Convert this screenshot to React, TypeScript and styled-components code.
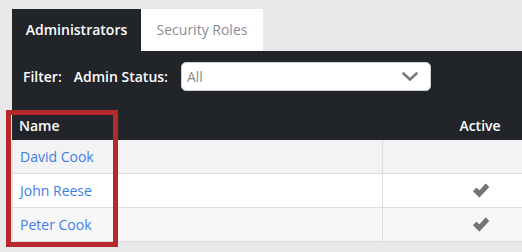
import React from "react";
import styled, { createGlobalStyle } from "styled-components";

const GlobalStyle = createGlobalStyle`
  html, body {
    margin: 0;
    padding: 0;
    background: #e9e9e9;
    overflow: hidden;
  }
  body {
    font-family: "Open Sans", "Liberation Sans", sans-serif;
    font-size: 14px;
  }
`;

type Admin = { name: string; active: boolean };

const admins: Admin[] = [
  { name: "David Cook", active: false },
  { name: "John Reese", active: true },
  { name: "Peter Cook", active: true },
];

const CheckIcon = () => (
  <svg width="18" height="17" viewBox="0 0 17 16">
    <path
      d="M1.5 8.6 L4.3 5.9 L7 8.6 L13 2 L15.7 4.7 L7 14 Z"
      fill="#747474"
      stroke="#747474"
      strokeWidth="1"
      strokeLinejoin="round"
    />
  </svg>
);

const Chevron = () => (
  <svg width="16" height="9" viewBox="0 0 16 9">
    <path
      d="M1.5 1.5 L8 7.5 L14.5 1.5"
      fill="none"
      stroke="#7a7a7a"
      strokeWidth="2.6"
      strokeLinecap="round"
    />
  </svg>
);

const App = () => {
  return (
    <>
      <GlobalStyle />
      <PageSC>
        <PanelSC>
          <TabsSC>
            <TabSC $active>Administrators</TabSC>
            <TabSC>Security Roles</TabSC>
          </TabsSC>
          <DarkSC>
            <FilterRowSC>
              <FilterLabelSC $gap={12}>Filter:</FilterLabelSC>
              <FilterLabelSC $gap={13}>Admin Status:</FilterLabelSC>
              <SelectSC>
                <span>All</span>
                <Chevron />
              </SelectSC>
            </FilterRowSC>
            <HeadRowSC>
              <HeadCellSC>Name</HeadCellSC>
              <HeadCellSC $center>Active</HeadCellSC>
            </HeadRowSC>
          </DarkSC>
          <BodySC>
            {admins.map((a, i) => (
              <RowSC key={a.name} $index={i}>
                <NameCellSC>
                  <LinkSC>{a.name}</LinkSC>
                </NameCellSC>
                <ActiveCellSC>{a.active && <CheckIcon />}</ActiveCellSC>
              </RowSC>
            ))}
          </BodySC>
        </PanelSC>
        <HighlightSC />
      </PageSC>
    </>
  );
};

const PageSC = styled.div`
  position: relative;
  padding: 9px 0 10px 12px;
  width: 600px;
`;

const PanelSC = styled.div`
  width: 566px;
`;

const TabsSC = styled.div`
  display: flex;
  height: 42px;
`;

const TabSC = styled.div<{ $active?: boolean }>`
  display: flex;
  align-items: center;
  justify-content: center;
  box-sizing: border-box;
  background: ${(p) => (p.$active ? "#212429" : "#ffffff")};
  color: ${(p) => (p.$active ? "#ffffff" : "#8b8e95")};
  font-weight: ${(p) => (p.$active ? 600 : 400)};
  width: ${(p) => (p.$active ? "129px" : "122px")};
  padding-bottom: 1px;
`;

const DarkSC = styled.div`
  background: #212429;
  color: #ffffff;
`;

const FilterRowSC = styled.div`
  display: flex;
  align-items: center;
  padding: 11px 0 0 11px;
  height: 29px;
`;

const FilterLabelSC = styled.span<{ $gap: number }>`
  font-weight: 600;
  margin-right: ${(p) => p.$gap}px;
`;

const SelectSC = styled.div`
  display: flex;
  align-items: center;
  justify-content: space-between;
  box-sizing: border-box;
  width: 250px;
  height: 29px;
  padding: 0 12px 0 5px;
  background: #ffffff;
  border: 1px solid #cfcfcf;
  border-radius: 5px;
  color: #8a8a8a;
`;

const HeadRowSC = styled.div`
  display: grid;
  grid-template-columns: 370px 1fr;
  height: 30px;
  margin-top: 19px;
  align-items: center;
`;

const HeadCellSC = styled.div<{ $center?: boolean }>`
  padding-left: ${(p) => (p.$center ? "0" : "7px")};
  text-align: ${(p) => (p.$center ? "center" : "left")};
  font-weight: 600;
`;

const BodySC = styled.div`
  border-left: 1px solid #dcdcdc;
`;

const RowSC = styled.div<{ $index: number }>`
  display: grid;
  grid-template-columns: 370px 1fr;
  height: 34px;
  box-sizing: border-box;
  border-bottom: 1px solid #dcdcdc;
  background: ${(p) =>
    p.$index === 0 ? "#f3f3f3" : p.$index % 2 === 1 ? "#ffffff" : "#f7f7f7"};
`;

const NameCellSC = styled.div`
  display: flex;
  align-items: center;
  padding-left: 7px;
  border-right: 1px solid #dcdcdc;
`;

const ActiveCellSC = styled.div`
  display: flex;
  align-items: center;
  justify-content: center;
`;

const LinkSC = styled.a`
  color: #3d7ee6;
  cursor: pointer;
`;

const HighlightSC = styled.div`
  position: absolute;
  left: 6px;
  top: 110px;
  width: 112px;
  height: 137px;
  box-sizing: border-box;
  border: 5px solid #b5282b;
  pointer-events: none;
`;

export default App;
